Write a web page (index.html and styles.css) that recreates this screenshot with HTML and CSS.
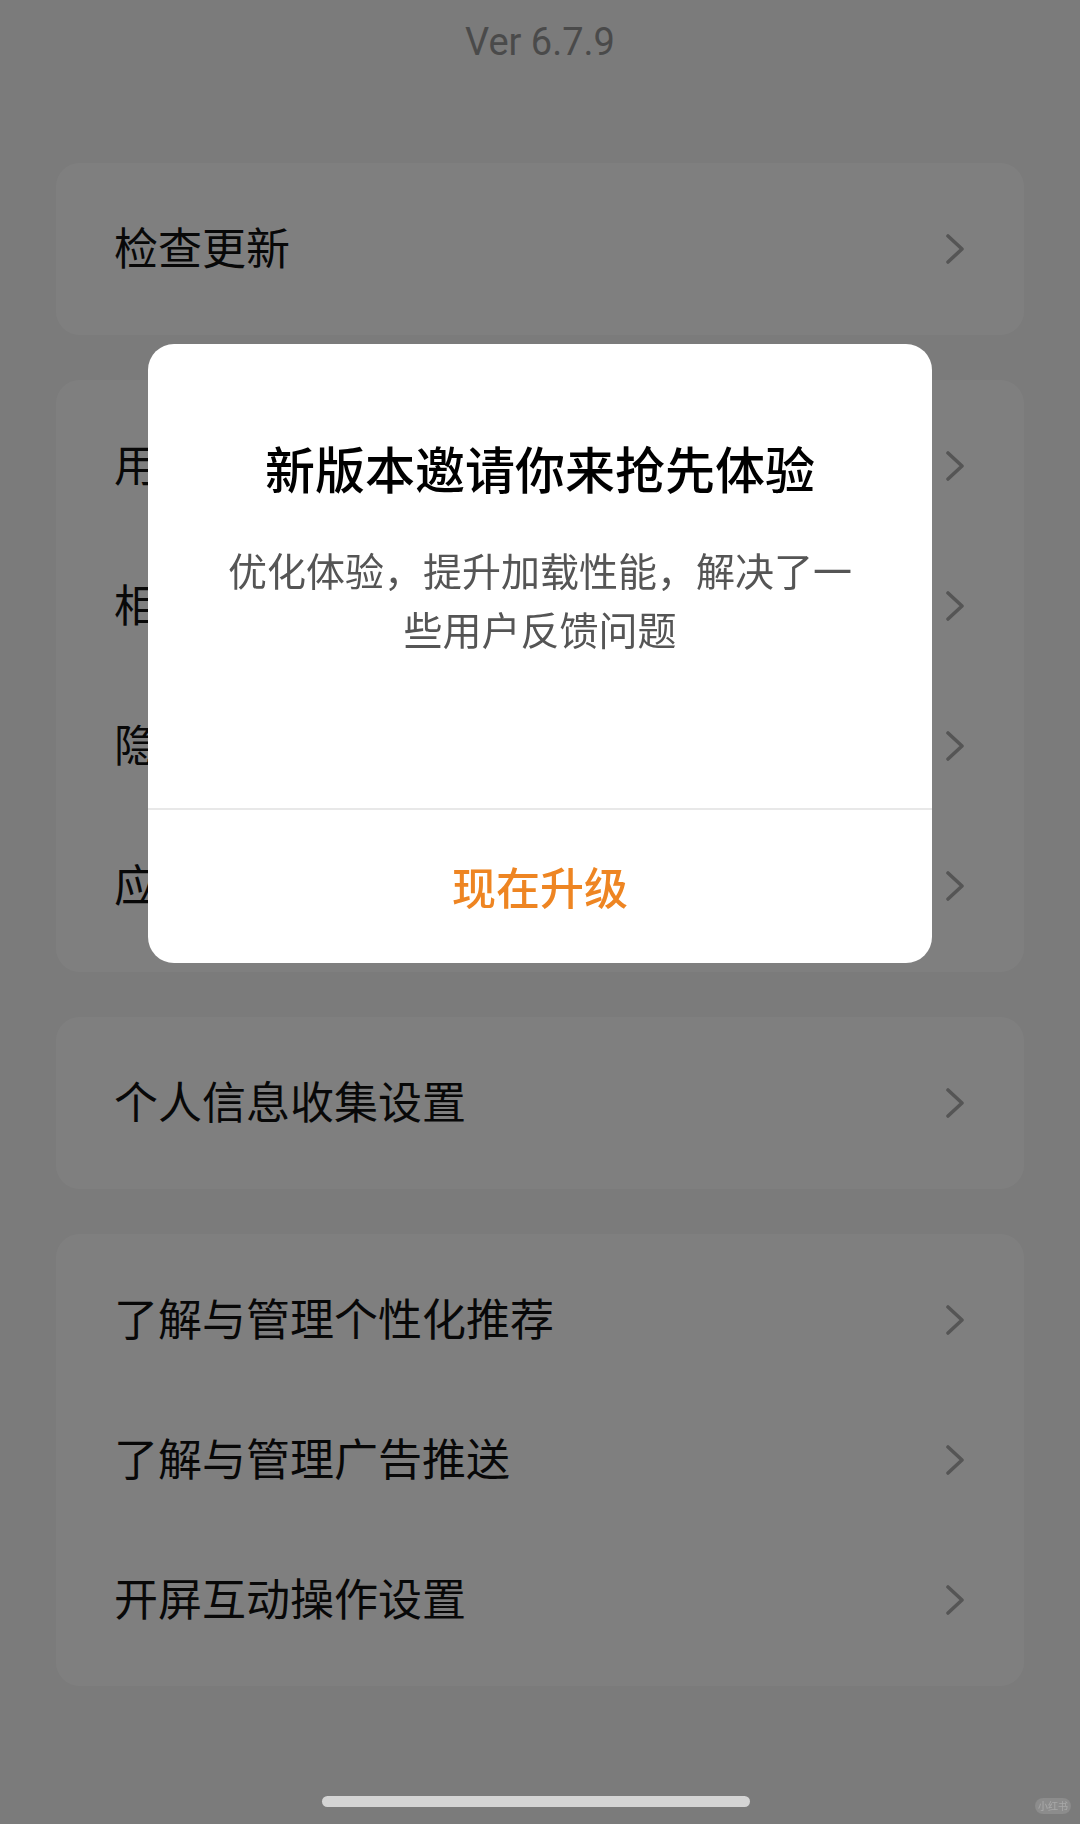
FILE: index.html
```html
<!DOCTYPE html>
<html lang="zh-CN">
<head>
<meta charset="utf-8">
<title>关于</title>
<link rel="stylesheet" href="styles.css">
</head>
<body>
<div class="page">
  <div class="ver">Ver 6.7.9</div>
  <div class="groups">
    <div class="card">
      <div class="row"><span class="label">检查更新</span><span class="chev"><svg viewBox="0 0 18 30" width="18" height="30"><path d="M2 2 L16 15 L2 28" fill="none" stroke="#aaaaaa" stroke-width="3.6" stroke-linecap="round" stroke-linejoin="round"/></svg></span></div>
    </div>
    <div class="card">
      <div class="row"><span class="label">用户协议</span><span class="chev"><svg viewBox="0 0 18 30" width="18" height="30"><path d="M2 2 L16 15 L2 28" fill="none" stroke="#aaaaaa" stroke-width="3.6" stroke-linecap="round" stroke-linejoin="round"/></svg></span></div>
      <div class="row"><span class="label">相关证照</span><span class="chev"><svg viewBox="0 0 18 30" width="18" height="30"><path d="M2 2 L16 15 L2 28" fill="none" stroke="#aaaaaa" stroke-width="3.6" stroke-linecap="round" stroke-linejoin="round"/></svg></span></div>
      <div class="row"><span class="label">隐私政策</span><span class="chev"><svg viewBox="0 0 18 30" width="18" height="30"><path d="M2 2 L16 15 L2 28" fill="none" stroke="#aaaaaa" stroke-width="3.6" stroke-linecap="round" stroke-linejoin="round"/></svg></span></div>
      <div class="row"><span class="label">应用权限说明</span><span class="chev"><svg viewBox="0 0 18 30" width="18" height="30"><path d="M2 2 L16 15 L2 28" fill="none" stroke="#aaaaaa" stroke-width="3.6" stroke-linecap="round" stroke-linejoin="round"/></svg></span></div>
    </div>
    <div class="card">
      <div class="row"><span class="label">个人信息收集设置</span><span class="chev"><svg viewBox="0 0 18 30" width="18" height="30"><path d="M2 2 L16 15 L2 28" fill="none" stroke="#aaaaaa" stroke-width="3.6" stroke-linecap="round" stroke-linejoin="round"/></svg></span></div>
    </div>
    <div class="card">
      <div class="row"><span class="label">了解与管理个性化推荐</span><span class="chev"><svg viewBox="0 0 18 30" width="18" height="30"><path d="M2 2 L16 15 L2 28" fill="none" stroke="#aaaaaa" stroke-width="3.6" stroke-linecap="round" stroke-linejoin="round"/></svg></span></div>
      <div class="row"><span class="label">了解与管理广告推送</span><span class="chev"><svg viewBox="0 0 18 30" width="18" height="30"><path d="M2 2 L16 15 L2 28" fill="none" stroke="#aaaaaa" stroke-width="3.6" stroke-linecap="round" stroke-linejoin="round"/></svg></span></div>
      <div class="row"><span class="label">开屏互动操作设置</span><span class="chev"><svg viewBox="0 0 18 30" width="18" height="30"><path d="M2 2 L16 15 L2 28" fill="none" stroke="#aaaaaa" stroke-width="3.6" stroke-linecap="round" stroke-linejoin="round"/></svg></span></div>
    </div>
  </div>
</div>

<div class="overlay">
  <div class="dialog">
    <div class="dialog-body">
      <div class="dialog-title">新版本邀请你来抢先体验</div>
      <div class="dialog-text">优化体验，提升加载性能，解决了一些用户反馈问题</div>
    </div>
    <div class="dialog-action">现在升级</div>
  </div>
  <div class="home-bar"></div>
  <div class="watermark">小红书</div>
</div>
</body>
</html>
```

FILE: styles.css
```css
html, body {
  margin: 0;
  padding: 0;
}
body {
  width: 1080px;
  height: 1824px;
  overflow: hidden;
  background: #f7f7f7;
  font-family: "Noto Sans CJK SC", "Noto Sans", Roboto, sans-serif;
  color: #1a1a1a;
}
.page {
  display: flex;
  flex-direction: column;
}
.ver {
  height: 84px;
  line-height: 84px;
  text-align: center;
  font-family: Roboto, "Noto Sans", sans-serif;
  font-size: 38px;
  color: #959595;
}
.groups {
  margin-top: 79px;
  padding: 0 56px;
  display: flex;
  flex-direction: column;
  gap: 45px;
}
.card {
  background: #ffffff;
  border-radius: 24px;
  padding: 16px 0;
  display: flex;
  flex-direction: column;
}
.row {
  height: 140px;
  display: flex;
  align-items: center;
  justify-content: space-between;
  padding: 0 60px 0 58px;
}
.label {
  font-size: 44px;
  line-height: 1;
  padding-bottom: 7px;
  color: #111;
}
.chev {
  display: flex;
  align-items: center;
}
.overlay {
  position: fixed;
  inset: 0;
  background: rgba(0, 0, 0, 0.5);
  display: flex;
  justify-content: center;
  align-items: flex-start;
  padding-top: 344px;
}
.dialog {
  width: 784px;
  background: #ffffff;
  border-radius: 26px;
  display: flex;
  flex-direction: column;
  overflow: hidden;
}
.dialog-body {
  height: 466px;
  border-bottom: 2px solid #e8e8e8;
  padding: 88px 70px 0;
  box-sizing: border-box;
  display: flex;
  flex-direction: column;
  align-items: center;
}
.dialog-title {
  font-size: 50px;
  line-height: 70px;
  font-weight: 500;
  color: #000;
  white-space: nowrap;
}
.dialog-text {
  margin-top: 38px;
  font-size: 39px;
  line-height: 59px;
  color: #555555;
  text-align: center;
}
.dialog-action {
  height: 153px;
  display: flex;
  align-items: center;
  justify-content: center;
  font-size: 44px;
  font-weight: 500;
  color: #ee8522;
  padding-bottom: 2px;
  box-sizing: border-box;
}
.home-bar {
  position: absolute;
  left: 322px;
  bottom: 17px;
  width: 428px;
  height: 11px;
  border-radius: 6px;
  background: #d4d4d4;
}
.watermark {
  position: absolute;
  right: 9px;
  bottom: 10px;
  width: 36px;
  height: 16px;
  border-radius: 8px;
  background: rgba(255, 255, 255, 0.12);
  color: rgba(255, 255, 255, 0.25);
  font-size: 10px;
  line-height: 16px;
  text-align: center;
}
```
